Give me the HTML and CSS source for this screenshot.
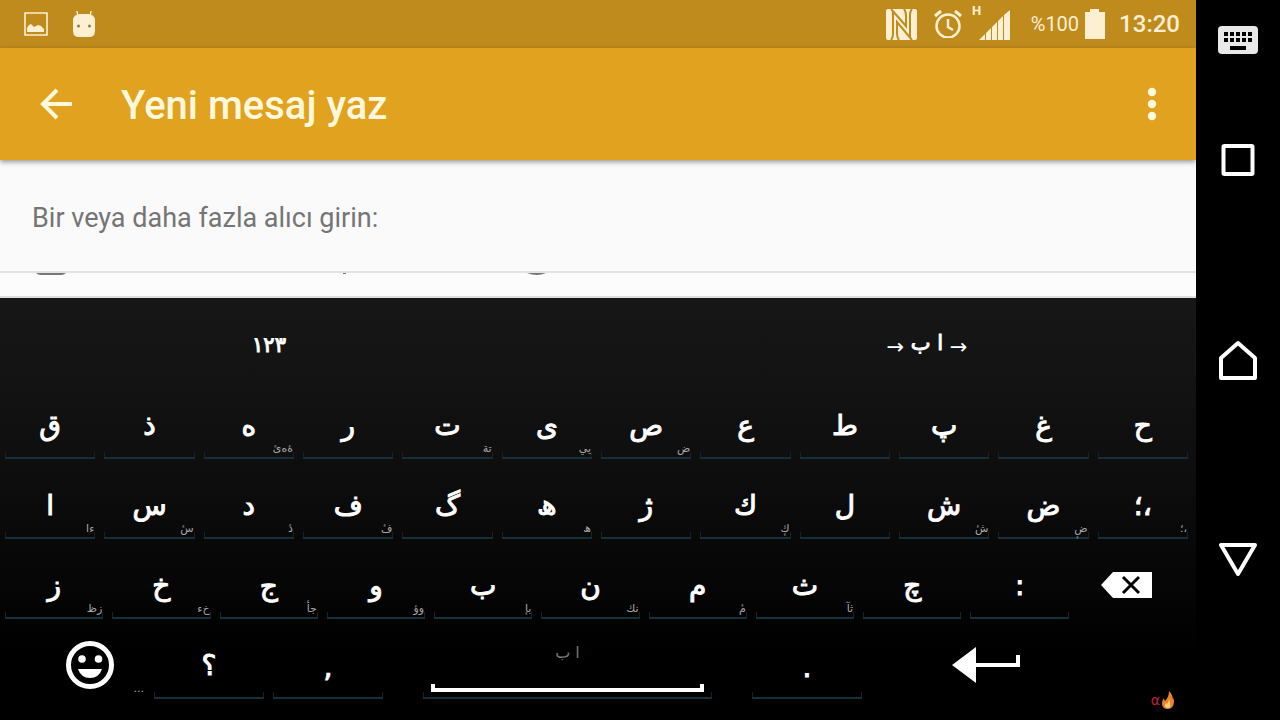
FILE: index.html
```html
<!DOCTYPE html>
<html lang="tr">
<head>
  <meta charset="UTF-8" />
  <meta name="viewport" content="width=device-width, initial-scale=1.0"/>
  <title>Yeni mesaj yaz</title>
  <link rel="stylesheet" href="styles.css">
</head>
<body>

  <main class="screen">
    <div class="status-bar">
      <svg width="24" height="24" viewBox="0 0 24 24"><path fill="none" stroke="#fcefd2" stroke-width="1.6" d="M1 1h22v22H1z"/><path fill="#fcefd2" d="M3 20v-4l2-3 2-1 3 3 4-2 3 1 3 3v3z"/></svg>
      <svg width="24" height="28" viewBox="0 0 24 28"><path stroke="#fcefd2" stroke-width="1.500" d="M6 7 5 1M18 7l1-6"/><path fill="#fcefd2" d="M1 9q1-4 6-5h10q5 1 6 5v12q0 6-6 6H7q-6 0-6-6z"/><circle cx="6.500" cy="16" r="1.500" fill="#8a7a55"/><circle cx="17.500" cy="16" r="1.500" fill="#8a7a55"/></svg>

      <div class="status-right">
        <svg class="nfc" width="31" height="31" viewBox="0 0 31 31"><path fill="#fcefd2" d="M2 0h27q2 0 2 2v27q0 2-2 2H2q-2 0-2-2V2q0-2 2-2z"/><path fill="none" stroke="#bf8b1d" stroke-width="2" d="M5 0l15 17V7q0-5-2-7M26 31 11 13v11q0 5 2 7M7 2v23q0 4-2 6M24 29V6q0-4 2-6"/></svg>
        <svg class="alarm" width="28" height="28" viewBox="0 0 28 28"><g fill="none" stroke="#fcefd2" stroke-width="2.500"><circle cx="14" cy="16" r="11.500"/><path d="M14 9v8l5 3"/><path stroke-width="3" d="M1 6l6-5M27 6l-6-5"/></g></svg>
        <svg class="signal" width="38" height="44" viewBox="0 0 38 44"><text class="net" x="0" y="13">H</text><path fill="#fcefd2" d="M7 38l6-6v6zM14 38v-7l5-5v12zM20 38V25l5-5v18zM26 38V19l5-5v24zM32 38V13l6-5v30z"/></svg>
        <span class="percent">%100</span>
        <svg class="battery" width="20" height="30" viewBox="0 0 20 30"><path fill="#fcefd2" d="M0 3h5V0h9v3h6v27H0z"/></svg>
        <span class="clock">13:20</span>
      </div>
    </div>

    <header class="app-bar">
      <button class="icon-btn" aria-label="Geri"><svg width="34" height="32" viewBox="0 0 34 32"><path fill="none" stroke="#fff8dc" stroke-width="4" d="M33 16H4M18 2 4 16l14 14"/></svg></button>
      <h1>Yeni mesaj yaz</h1>
      <button class="icon-btn" aria-label="Menü"><svg width="10" height="34" viewBox="0 0 10 34"><g fill="#fff8dc"><circle cx="5" cy="5" r="4.200"/><circle cx="5" cy="17" r="4.200"/><circle cx="5" cy="29" r="4.200"/></g></svg></button>
    </header>

    <input class="recipients" type="text" placeholder="Bir veya daha fazla alıcı girin:" aria-label="Alıcı">
    <div class="toolbar-edge">
      <svg width="620" height="3" viewBox="0 0 620 3"><g fill="#777"><path d="M36 0h30q-2 2-5 2H41q-3 0-5-2zM343 0h3v1h-3zM527 0h19q-9 4-19 0z"/></g></svg>
    </div>

    <section class="keyboard" aria-label="Klavye">
      <div class="mode-row">
        <button>١٢٣</button>
        <button dir="ltr"><span class="arrow">→</span> <bdo dir="rtl">ا ب</bdo> <span class="arrow">→</span></button>
      </div>

      <div class="row row-12">
        <button class="key">ق</button>
        <button class="key">ذ</button>
        <button class="key">ه<small>ۀه&zwnj;ئ</small></button>
        <button class="key">ر</button>
        <button class="key">ت<small>تة</small></button>
        <button class="key">ی<small>يي</small></button>
        <button class="key">ص<small>ض</small></button>
        <button class="key">ع</button>
        <button class="key">ط</button>
        <button class="key">پ</button>
        <button class="key">غ</button>
        <button class="key">ح</button>
      </div>

      <div class="row row-12">
        <button class="key">ا<small>ءا</small></button>
        <button class="key">س<small>سٔ</small></button>
        <button class="key">د<small>دٔ</small></button>
        <button class="key">ف<small>فٔ</small></button>
        <button class="key">گ</button>
        <button class="key">ھ<small>ھ</small></button>
        <button class="key">ژ</button>
        <button class="key">ك<small>كٕ</small></button>
        <button class="key">ل</button>
        <button class="key">ش<small>شٔ</small></button>
        <button class="key">ض<small>ضٕ</small></button>
        <button class="key">،؛<small>،؛</small></button>
      </div>

      <div class="row row-11">
        <button class="key">ز<small>زظ</small></button>
        <button class="key">خ<small>خء</small></button>
        <button class="key">ج<small>جأ</small></button>
        <button class="key">و<small>وؤ</small></button>
        <button class="key">ب<small>بإ</small></button>
        <button class="key">ن<small>نك</small></button>
        <button class="key">م<small>مٔ</small></button>
        <button class="key">ث<small>ثآ</small></button>
        <button class="key">چ</button>
        <button class="key">:</button>
        <button class="key plain" aria-label="Sil"><svg width="51" height="26" viewBox="0 0 51 26"><path fill="#fff" d="M0 13 12 0h39v26H12z"/><path stroke="#000" stroke-width="3" d="m22 5 16 16M38 5 22 21"/></svg></button>
      </div>

      <div class="row row-bottom">
        <button class="key plain" aria-label="Emoji"><svg width="48" height="48" viewBox="0 0 48 48"><circle cx="24" cy="24" r="21.500" fill="none" stroke="#fff" stroke-width="5"/><g fill="#fff"><circle cx="16" cy="18" r="3.800"/><circle cx="32.500" cy="18" r="3.800"/><path d="M12 28h24q-3 9-12 9t-12-9z"/></g></svg><small>...</small></button>
        <button class="key">؟</button>
        <button class="key low">,</button>
        <button class="key space"><span class="layout">ا ب</span><span class="bar"></span></button>
        <button class="key low">.</button>
        <button class="key plain" aria-label="Enter"><svg width="68" height="36" viewBox="0 0 68 36"><path fill="#fff" d="M0 18 24 0v16h40V8h4v12H24v16z"/></svg></button>
        <span class="brand">α<svg width="12" height="18" viewBox="0 0 12 18"><path fill="#e8842c" d="M7 0q4 4 4 9 1-1 1-3 1 12-6 12Q0 18 0 12q0-3 2-5 0 2 1 3 4-4 4-10z"/><path fill="#ffd27a" d="M7 8q3 9-1 9-3 0-3-3 0-1 1-2l1 1q2-2 2-5z"/></svg></span>
      </div>
    </section>
  </main>

  <nav class="nav-bar">
    <button class="ime" aria-label="Klavye seç"><svg width="40" height="28" viewBox="0 0 40 28"><rect width="40" height="28" rx="4" fill="#e8e8e8"/><path stroke="#000" stroke-width="4" stroke-dasharray="4 2" d="M6 8h28M6 14h28"/><path stroke="#000" stroke-width="4" d="M12 22h16"/></svg></button>
    <button aria-label="Son uygulamalar"><svg width="34" height="34" viewBox="0 0 34 34"><rect x="2.500" y="3" width="29" height="28" rx="1" fill="none" stroke="#fff" stroke-width="4"/></svg></button>
    <button aria-label="Ana ekran"><svg width="40" height="40" viewBox="0 0 40 40"><path fill="none" stroke="#fff" stroke-width="4" stroke-linejoin="round" d="M3 18 20 3l17 15v20H3z"/></svg></button>
    <button aria-label="Geri git"><svg width="38" height="34" viewBox="0 0 38 34"><path fill="none" stroke="#fff" stroke-width="4" stroke-linejoin="round" d="M2 2h34L19 31z"/></svg></button>
  </nav>

</body>
</html>
```
FILE: styles.css
```css
* {
  box-sizing: border-box;
}

body {
  margin: 0;
  min-height: 100vh;
  display: flex;
  background: #000;
  font-family: Roboto, sans-serif;
}

button {
  margin: 0;
  padding: 0;
  border: none;
  background: none;
  color: #fff;
  font: inherit;
  cursor: pointer;
}

svg {
  display: block;
  flex: none;
}

.screen {
  flex: 1;
  min-width: 0;
  display: flex;
  flex-direction: column;
}

/* status bar */
.status-bar {
  height: 48px;
  padding: 0 16px 0 24px;
  display: flex;
  align-items: center;
  gap: 24px;
  background: #bf8b1d;
  color: #fcefd2;
}

.status-right {
  margin-left: auto;
  display: flex;
  align-items: center;
}

.alarm {
  margin: 0 10px 0 17px;
}

.net {
  fill: #fcefd2;
  font-size: 13px;
  font-weight: 700;
}

.percent {
  margin: 0 6px 0 21px;
  font-size: 20px;
}

.clock {
  margin-left: 14px;
  font-size: 24px;
  font-weight: 500;
}

/* app bar */
.app-bar {
  position: relative;
  height: 112px;
  padding: 0 39px;
  display: flex;
  align-items: center;
  background: #e1a220;
  box-shadow: 0 2px 5px rgba(0, 0, 0, 0.4);
}

.app-bar h1 {
  flex: 1;
  margin: 0 0 0 48px;
  padding-top: 2px;
  color: #fff8dc;
  font-size: 40px;
  font-weight: 500;
}

.recipients {
  width: 100%;
  height: 113px;
  padding: 4px 32px 0;
  border: none;
  border-bottom: 2px solid #e3e3e3;
  border-radius: 0;
  outline: none;
  background: #fafafa;
  color: #212121;
  font: 27px Roboto, sans-serif;
}

.recipients::placeholder {
  color: #757575;
}

.toolbar-edge {
  height: 25px;
  overflow: hidden;
  border-bottom: 2px solid #dedede;
  background: #fcfcfc;
}

/* keyboard */
.keyboard {
  flex: 1;
  display: flex;
  flex-direction: column;
  gap: 10px;
  padding-bottom: 21px;
  background: linear-gradient(#171717, #0e0e0e 40%, #000 85%);
  font-family: "DejaVu Sans", sans-serif;
}

.mode-row {
  height: 81px;
  padding-top: 12px;
  display: grid;
  grid-template-columns: 1fr 1fr;
  column-gap: 120px;
  font-size: 21px;
  -webkit-text-stroke: 1px #fff;
}

.arrow {
  vertical-align: -4px;
  -webkit-text-stroke: 0;
}

.row {
  display: grid;
  column-gap: 9px;
  padding: 0 8px 0 5px;
}

.row-12 {
  grid-template-columns: repeat(12, 1fr);
}

.row-11 {
  grid-template-columns: repeat(11, 1fr);
  padding-right: 20px;
}

.row-bottom {
  grid-template-columns: 110fr 110fr 110fr 351fr 110fr 230fr 78fr;
  padding-left: 35px;
}

.key {
  position: relative;
  height: 70px;
  padding-top: 2px;
  display: flex;
  align-items: center;
  justify-content: center;
  direction: rtl;
  background:
    linear-gradient(#15303c, #15303c) bottom / 100% 2px no-repeat,
    linear-gradient(#10242d, #10242d) left bottom / 1px 7px no-repeat,
    linear-gradient(#10242d, #10242d) right bottom / 1px 7px no-repeat;
  font-size: 28px;
  -webkit-text-stroke: 1px #fff;
}

.key.low {
  padding-top: 6px;
}

.key small {
  position: absolute;
  right: 1px;
  bottom: 3px;
  color: #a8a8a8;
  font-size: 11px;
  line-height: 14px;
  -webkit-text-stroke: 0;
}

.key.plain {
  background: none;
}

.key.space {
  margin: 0 31px;
  flex-direction: column;
  justify-content: space-between;
  padding: 14px 8px 7px;
}

.layout {
  color: #777;
  font-size: 16px;
  -webkit-text-stroke: 0;
}

.bar {
  width: 100%;
  height: 8px;
  border: 4px solid #fff;
  border-top: none;
}

.brand {
  align-self: end;
  display: flex;
  align-items: center;
  justify-content: flex-end;
  gap: 2px;
  padding-right: 14px;
  margin-bottom: -10px;
  color: #c01c38;
  font-size: 14px;
}

/* system navigation */
.nav-bar {
  width: 84px;
  padding: 20px 0 60px;
  display: flex;
  flex-direction: column;
}

.nav-bar button {
  flex: 1;
  display: flex;
  align-items: center;
  justify-content: center;
}

.nav-bar .ime {
  flex: 0 0 40px;
}
```
